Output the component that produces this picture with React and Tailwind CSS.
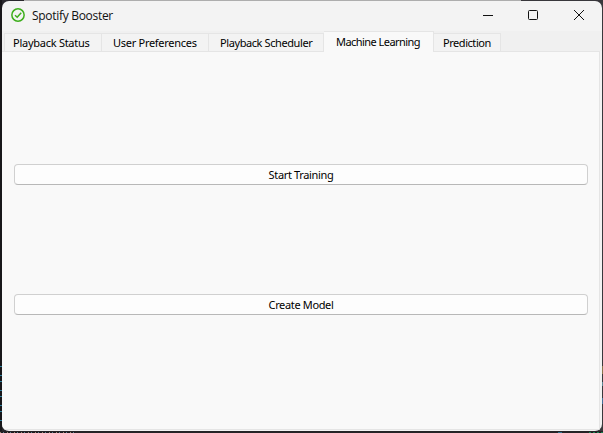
const tabs = [
  { label: 'Playback Status', box: 'w-[98px] pl-[8px]', text: 'tracking-[-0.26px]' },
  { label: 'User Preferences', box: 'w-[107px] pl-[11px]', text: 'tracking-[-0.28px]' },
  { label: 'Playback Scheduler', box: 'w-[115px] pl-[11px]', text: 'tracking-[-0.41px]' },
  { label: 'Machine Learning', box: 'w-[110px] pl-[12px]', text: 'tracking-[-0.55px]', active: true },
  { label: 'Prediction', box: 'w-[67px] pl-[9px]', text: 'tracking-[-0.45px]' },
];

const leftTicks = ['top-[366px]', 'top-[375px]', 'top-[381px]', 'top-[390px]', 'top-[396px]', 'top-[405px]', 'top-[411px]', 'top-[420px]'];

function TitleBar() {
  return (
    <header className="flex h-[30px] shrink-0 items-center pl-[9px]">
      <svg className="-mt-[2px] size-[14px] shrink-0" viewBox="0 0 14 14" fill="none" stroke="#3dae1c" strokeWidth="1.5">
        <circle cx="7" cy="7" r="6.15" />
        <path d="M4 7.2 6.2 9.2 10.2 4.7" />
      </svg>
      <h1 className="ml-[7px] whitespace-nowrap font-['Open_Sans','Noto_Sans',sans-serif] text-[12px] leading-[16px] tracking-[-0.3px] text-[#111]">
        Spotify Booster
      </h1>
      <div className="ml-auto flex h-full items-center pr-[17px] pb-[2px] text-[#111]">
        <svg className="h-[12px] w-[12px]" viewBox="0 0 12 12" fill="none" stroke="currentColor">
          <path d="M1 6.5h10" />
        </svg>
        <svg className="ml-[33px] h-[12px] w-[12px]" viewBox="0 0 12 12" fill="none" stroke="currentColor">
          <rect x="1.5" y="1.5" width="9" height="9" rx="1" />
        </svg>
        <svg className="ml-[34px] h-[12px] w-[12px]" viewBox="0 0 12 12" fill="none" stroke="currentColor">
          <path d="m1 1 10 10M11 1 1 11" />
        </svg>
      </div>
    </header>
  );
}

function Tab({ label, box, text, active }) {
  return (
    <button
      className={`flex shrink-0 items-center whitespace-nowrap border-t border-r border-[#e5e5e5] first:border-l ${box} ${
        active ? 'z-10 -mb-px h-[21px] bg-[#f9f9f9]' : 'h-[18px] bg-[#f3f3f3]'
      }`}
    >
      <span className={text}>{label}</span>
    </button>
  );
}

function PushButton({ children }) {
  return (
    <button className="flex h-[21px] w-full items-center justify-center rounded-[4px] border border-[#d0d0d0] border-b-[#b8b8b8] bg-[#fdfdfd] tracking-[-0.35px]">
      {children}
    </button>
  );
}

export default function App() {
  return (
    <div className="relative flex h-[433px] w-[603px] flex-col overflow-hidden bg-[linear-gradient(90deg,#29282d_0_24px,#adadad_24px_521px,#38373b_521px)] font-['Noto_Sans','Open_Sans',sans-serif] text-[11px] leading-[14px] text-black">
      <div className="flex h-full w-full flex-col">
        <div className="flex min-h-0 flex-1 bg-[linear-gradient(90deg,#18171a_0_2px,transparent_2px_601px,#39383c_601px)] pt-px pl-[2px] pr-px">
          <main className="flex h-[430px] w-[600px] flex-col overflow-hidden rounded-[7px] bg-[#f3f3f3]">
            <TitleBar />
            <nav className="flex h-[20px] shrink-0 items-end bg-[#f0f0f0] pl-[2px]">
              {tabs.map((tab) => (
                <Tab key={tab.label} {...tab} />
              ))}
            </nav>
            <section className="mr-[2px] flex h-[379px] shrink-0 flex-col border border-l-0 border-[#e5e5e5] bg-[#f9f9f9] pr-[11px] pl-[12px] pt-[112px]">
              <PushButton>Start Training</PushButton>
              <div className="h-[109px]" />
              <PushButton>Create Model</PushButton>
            </section>
          </main>
        </div>
        <div className="h-[2px] shrink-0 bg-[#252326]" />
      </div>
      {/* Slivers of the desktop content behind the window edges */}
      {leftTicks.map((top) => (
        <i key={top} className={`absolute left-0 h-px w-[2px] bg-[#2f7f9c] ${top}`} />
      ))}
      <i className="absolute bottom-0 left-0 h-px w-[75px] bg-[repeating-linear-gradient(90deg,#9a8a78_0_1px,#1c1b1f_1px_3px,#5b7f91_3px_4px,#1c1b1f_4px_7px)]" />
      <i className="absolute right-0 top-[366px] h-[8px] w-px bg-[#8b744a]" />
      <i className="absolute right-0 top-[382px] h-[4px] w-px bg-[#5b8795]" />
      <i className="absolute right-0 top-[398px] h-[6px] w-px bg-[#42709a]" />
      <i className="absolute bottom-0 left-[558px] h-px w-[4px] bg-[#2f7390]" />
      <i className="absolute bottom-0 right-0 h-px w-[14px] bg-[repeating-linear-gradient(90deg,#16824f_0_2px,#1c1b1f_2px_4px)]" />
    </div>
  );
}
